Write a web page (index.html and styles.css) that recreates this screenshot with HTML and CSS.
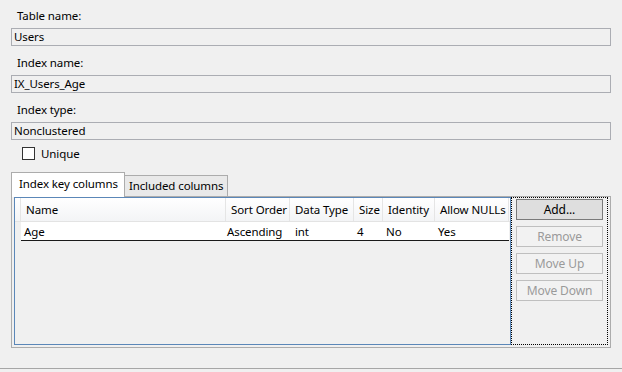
FILE: index.html
```html
<!DOCTYPE html>
<html lang="en">
<head>
    <meta charset="UTF-8">
    <title>Index Properties</title>
    <link rel="stylesheet" href="styles.css">
</head>
<body>
    <div class="dialog">
        <div class="field">
            <div class="label">Table name:</div>
            <div class="textbox">Users</div>
        </div>
        <div class="field">
            <div class="label">Index name:</div>
            <div class="textbox">IX_Users_Age</div>
        </div>
        <div class="field field-last">
            <div class="label">Index type:</div>
            <div class="textbox">Nonclustered</div>
        </div>
        <div class="check">
            <span class="check-box"></span>
            <span>Unique</span>
        </div>

        <div class="tabs">
            <div class="tab active">Index key columns</div>
            <div class="tab">Included columns</div>
        </div>
        <div class="tab-panel">
            <div class="listview">
                <div class="lv-header">
                    <div class="lv-gutter"></div>
                    <div class="lv-col">Name</div>
                    <div class="lv-col">Sort Order</div>
                    <div class="lv-col">Data Type</div>
                    <div class="lv-col">Size</div>
                    <div class="lv-col">Identity</div>
                    <div class="lv-col">Allow NULLs</div>
                </div>
                <div class="lv-item">
                    <div class="lv-cell">Age</div>
                    <div class="lv-cell">Ascending</div>
                    <div class="lv-cell">int</div>
                    <div class="lv-cell">4</div>
                    <div class="lv-cell">No</div>
                    <div class="lv-cell">Yes</div>
                </div>
            </div>
            <div class="side-buttons">
                <button class="btn default">Add...</button>
                <button class="btn" disabled>Remove</button>
                <button class="btn" disabled>Move Up</button>
                <button class="btn" disabled>Move Down</button>
            </div>
        </div>
    </div>
    <div class="separator"></div>
</body>
</html>
```

FILE: styles.css
```css
html, body {
    margin: 0;
    padding: 0;
    height: 372px;
    overflow: hidden;
}
body {
    font-family: "Segoe UI", "Noto Sans", sans-serif;
    font-size: 11.5px;
    letter-spacing: -0.1px;
    color: #000;
    background-color: #f0f0f0;
    white-space: nowrap;
}
.dialog {
    padding: 8px 11px 0 11px;
    height: 360px;
    box-sizing: border-box;
}
.field {
    margin-bottom: 9px;
}
.field-last {
    margin-bottom: 0;
}
.label {
    height: 16px;
    line-height: 16px;
    padding-left: 6px;
    margin-bottom: 4px;
}
.textbox {
    height: 18px;
    line-height: 16px;
    box-sizing: border-box;
    border: 1px solid #abadb3;
    padding-left: 2px;
    background-color: #f0f0f0;
}
.check {
    display: flex;
    align-items: center;
    gap: 6px;
    height: 14px;
    margin: 6px 0 0 11px;
}
.check-box {
    width: 13px;
    height: 13px;
    box-sizing: border-box;
    border: 1px solid #333;
    background: #fff;
}
.tabs {
    display: flex;
    align-items: flex-end;
    height: 24px;
    margin-top: 12px;
}
.tab {
    height: 21px;
    line-height: 20px;
    box-sizing: border-box;
    padding: 0 4px;
    border: 1px solid #acacac;
    border-bottom: none;
    background-color: #e9e9e9;
}
.tab.active {
    position: relative;
    z-index: 1;
    height: 25px;
    line-height: 22px;
    margin-bottom: -1px;
    margin-right: -1px;
    padding: 0 6px 0 7px;
    background-color: #fff;
}
.tab-panel {
    display: flex;
    height: 152px;
    box-sizing: border-box;
    border: 1px solid #acacac;
    padding: 0 2px 2px 2px;
}
.listview {
    width: 499px;
    box-sizing: border-box;
    border: 1px solid #5b87b8;
    background-color: #f0f0f0;
}
.lv-header {
    display: grid;
    grid-template-columns: 6px 205px 64px 64px 29px 52px 74px 1fr;
    height: 24px;
    box-sizing: border-box;
    border-bottom: 1px solid #e3e3e3;
    background: linear-gradient(#ffffff, #f3f4f6);
}
.lv-gutter,
.lv-col {
    border-right: 1px solid #e5e5e5;
    line-height: 23px;
    overflow: hidden;
}
.lv-col {
    padding-left: 5px;
}
.lv-item {
    display: grid;
    grid-template-columns: 205px 64px 64px 29px 52px 74px;
    width: 488px;
    height: 19px;
    margin-left: 6px;
    box-sizing: border-box;
    background-color: #fff;
    border-bottom: 1px solid #1a1a1a;
    line-height: 19px;
}
.lv-cell {
    padding-left: 3px;
    overflow: hidden;
}
.lv-cell:nth-child(2) {
    padding-left: 1px;
}
.lv-cell:nth-child(3) {
    padding-left: 5px;
}
.side-buttons {
    display: flex;
    flex-direction: column;
    gap: 6px;
    width: 97px;
    box-sizing: border-box;
    border: 1px dotted #000;
    padding: 0 4px;
}
.btn {
    height: 21px;
    width: 87px;
    padding: 0;
    font-family: inherit;
    font-size: 12px;
    letter-spacing: -0.1px;
    line-height: 19px;
    border: 1px solid #bfbfbf;
    background-color: #f2f2f2;
    color: #9a9a9a;
}
.btn.default {
    margin-top: 1px;
    border-color: #7a7a7a;
    background-color: #dedede;
    color: #000;
}
.separator {
    height: 1px;
    margin-top: 8px;
    background-color: #a6a6a6;
}
```
